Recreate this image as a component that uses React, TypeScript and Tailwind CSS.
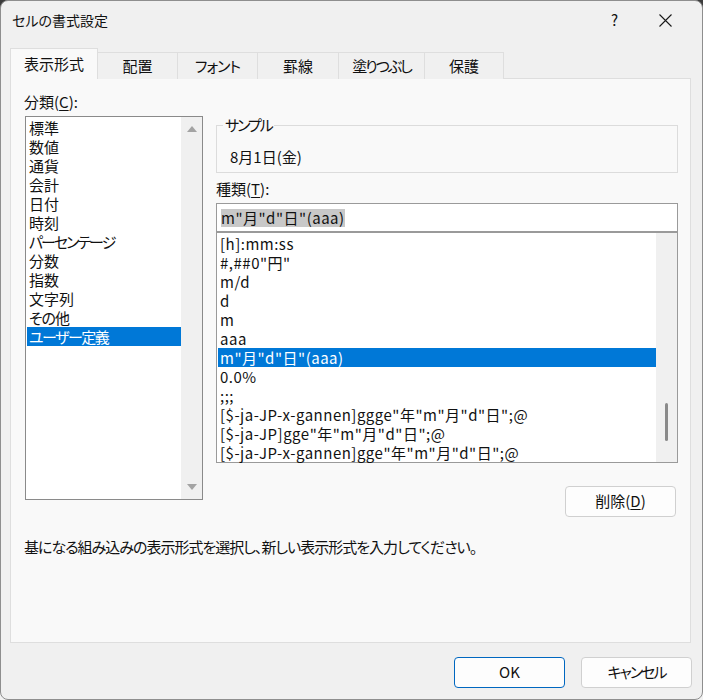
import React from "react";

// category entries with per-label tracking for the kana-heavy ones
const categories: { label: string; tr?: string }[] = [
  { label: "標準" },
  { label: "数値" },
  { label: "通貨" },
  { label: "会計" },
  { label: "日付" },
  { label: "時刻" },
  { label: "パーセンテージ", tr: "tracking-[-2px]" },
  { label: "分数" },
  { label: "指数" },
  { label: "文字列" },
  { label: "その他", tr: "tracking-[-1px]" },
  { label: "ユーザー定義", tr: "tracking-[-1.5px]" },
];

const formats = [
  "[h]:mm:ss",
  '#,##0"円"',
  "m/d",
  "d",
  "m",
  "aaa",
  'm"月"d"日"(aaa)',
  "0.0%",
  ";;;",
  '[$-ja-JP-x-gannen]ggge"年"m"月"d"日";@',
  '[$-ja-JP]gge"年"m"月"d"日";@',
  '[$-ja-JP-x-gannen]gge"年"m"月"d"日";@',
];

const tabs = [
  { label: "表示形式", w: "w-[88px]", tr: "" },
  { label: "配置", w: "w-[80px]", tr: "" },
  { label: "フォント", w: "w-[80px]", tr: "tracking-[-1px]" },
  { label: "罫線", w: "w-[81px]", tr: "" },
  { label: "塗りつぶし", w: "w-[86px]", tr: "tracking-[-2px]" },
  { label: "保護", w: "w-[79px]", tr: "" },
];

function UpArrow() {
  return (
    <svg width="10" height="6" viewBox="0 0 10 6">
      <path d="M5 0 L10 6 L0 6 Z" fill="#a3a3a3" />
    </svg>
  );
}

function DownArrow() {
  return (
    <svg width="10" height="6" viewBox="0 0 10 6">
      <path d="M0 0 L10 0 L5 6 Z" fill="#a3a3a3" />
    </svg>
  );
}

function CloseIcon() {
  return (
    <svg width="13" height="13" viewBox="0 0 13 13">
      <path d="M0.5 0.5 L12.5 12.5 M12.5 0.5 L0.5 12.5" stroke="#1a1a1a" strokeWidth="1.1" />
    </svg>
  );
}

export default function App() {
  return (
    <div
      className="w-[703px] h-[700px] bg-gradient-to-b from-[#3c3c3c] via-[#9a9a9a] to-[#f2f2f2] text-[#111] [font-feature-settings:'palt']"
      style={{ fontFamily: '"Noto Sans CJK JP", "Noto Sans", sans-serif' }}
    >
      <div className="w-[703px] h-[700px] rounded-[8px] border border-[#8e8e8e] bg-[#f0f0f0] flex flex-col overflow-hidden">
        {/* title bar */}
        <div className="h-[38px] flex items-center shrink-0">
          <span className="ml-[11px] text-[14px] leading-[20px]">セルの書式設定</span>
          <span className="ml-auto mr-[41px] text-[15px] leading-[20px]">?</span>
          <span className="mr-[30px] flex items-center">
            <CloseIcon />
          </span>
        </div>

        {/* tab strip */}
        <div className="mt-[9px] ml-[9px] flex items-end h-[31px] -mb-px relative z-10">
          {tabs.map((t, i) =>
            i === 0 ? (
              <div
                key={t.label}
                className={`${t.w} h-[31px] bg-[#f9f9f9] border border-b-0 border-[#dedede] flex items-center justify-center text-[15px]`}
              >
                {t.label}
              </div>
            ) : (
              <div
                key={t.label}
                className={`${t.w} ${t.tr} h-[27px] bg-[#f0f0f0] border border-l-0 border-b-0 border-[#dedede] flex items-center justify-center text-[15px]`}
              >
                {t.label}
              </div>
            )
          )}
        </div>

        {/* tab page */}
        <div className="ml-[9px] w-[681px] h-[565px] bg-[#f9f9f9] border border-[#dedede] shrink-0 flex flex-col">
          <div className="flex items-start pt-[13px]">
            {/* category column */}
            <div className="ml-[13px] flex flex-col">
              <div className="text-[15px] leading-[20px]">
                分類(<span className="underline underline-offset-2">C</span>):
              </div>
              <div className="mt-[4px] ml-px w-[178px] h-[384px] border border-[#8a8a8a] bg-white flex">
                <div className="flex-1 pt-px">
                  {categories.map((c) => {
                    const sel = c.label === "ユーザー定義";
                    return (
                      <div
                        key={c.label}
                        className={`ml-px h-[19px] leading-[19px] text-[15px] pl-[2px] ${c.tr ?? ""} ${
                          sel ? "bg-[#0078d7] text-white" : ""
                        }`}
                      >
                        {c.label}
                      </div>
                    );
                  })}
                </div>
                <div className="w-[21px] bg-[#f0f0f0] flex flex-col items-center justify-between py-[9px]">
                  <UpArrow />
                  <DownArrow />
                </div>
              </div>
            </div>

            {/* type column */}
            <div className="ml-[13px] w-[462px] mt-[33px] flex flex-col">
              <div className="relative h-[48px] border border-[#dcdcdc]">
                <span className="absolute left-[6px] -top-[11px] px-[2px] bg-[#f9f9f9] text-[15px] leading-[20px] tracking-[-2px]">
                  サンプル
                </span>
                <div className="pt-[21px] pl-[13px] text-[15px] leading-[20px]">8月1日(金)</div>
              </div>
              <div className="mt-[6px] text-[15px] leading-[20px]">
                種類(<span className="underline underline-offset-2">T</span>):
              </div>
              <div className="mt-[4px] h-[29px] border border-[#9a9a9a] bg-white flex items-center pl-[4px]">
                <span className="bg-[#c8c8c8] text-[15px] leading-[18px] tracking-[0.5px]">m"月"d"日"(aaa)</span>
              </div>
              <div className="h-[231px] border border-[#9a9a9a] bg-white flex">
                <div className="flex-1 pt-px">
                  {formats.map((f, i) => {
                    const sel = i === 6;
                    return (
                      <div
                        key={f}
                        className={`ml-px h-[19px] leading-[19px] text-[15px] pl-[2px] tracking-[0.5px] whitespace-nowrap ${
                          sel ? "bg-[#0078d7] text-white" : ""
                        }`}
                      >
                        {f}
                      </div>
                    );
                  })}
                </div>
                <div className="w-[21px] bg-[#f0f0f0] flex justify-center pt-[170px]">
                  <div className="w-[3px] h-[38px] rounded-full bg-[#8a8a8a]" />
                </div>
              </div>
              <div className="mt-[23px] self-end mr-[2px] w-[111px] h-[31px] rounded-[4px] border border-[#d0d0d0] bg-[#fdfdfd] flex items-center justify-center text-[15px]">
                削除(<span className="underline underline-offset-2">D</span>)
              </div>
            </div>
          </div>

          <div className="mt-[20px] ml-[13px] text-[15px] leading-[20px] tracking-[-1px]">
            基になる組み込みの表示形式を選択し、新しい表示形式を入力してください。
          </div>
        </div>

        {/* footer buttons */}
        <div className="mt-[14px] flex justify-end gap-[16px] mr-[10px]">
          <div className="w-[111px] h-[31px] rounded-[4px] border border-[#0067c0] bg-[#fdfdfd] flex items-center justify-center text-[15px]">
            OK
          </div>
          <div className="w-[111px] h-[31px] rounded-[4px] border border-[#d0d0d0] bg-[#fdfdfd] flex items-center justify-center text-[15px] tracking-[-2px]">
            キャンセル
          </div>
        </div>
      </div>
    </div>
  );
}
